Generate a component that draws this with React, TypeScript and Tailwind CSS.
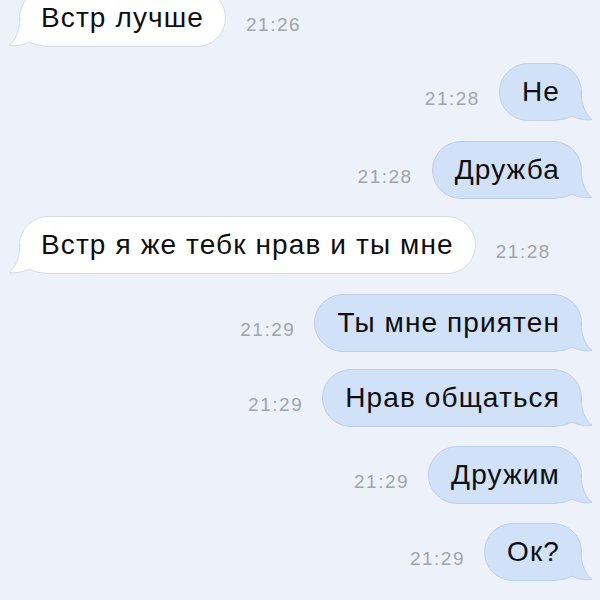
import React from 'react';

interface Message {
  id: number;
  text: string;
  time: string;
  out: boolean;
  top: number;
}

const messages: Message[] = [
  { id: 1, text: 'Встр лучше', time: '21:26', out: false, top: -11 },
  { id: 2, text: 'Не', time: '21:28', out: true, top: 16 },
  { id: 3, text: 'Дружба', time: '21:28', out: true, top: 20 },
  { id: 4, text: 'Встр я же тебк нрав и ты мне', time: '21:28', out: false, top: 17 },
  { id: 5, text: 'Ты мне приятен', time: '21:29', out: true, top: 20 },
  { id: 6, text: 'Нрав общаться', time: '21:29', out: true, top: 17 },
  { id: 7, text: 'Дружим', time: '21:29', out: true, top: 19 },
  { id: 8, text: 'Ок?', time: '21:29', out: true, top: 19 },
];

const Tail: React.FC<{ out: boolean }> = ({ out }) => {
  const fill = out ? '#d0e1f8' : '#ffffff';
  const stroke = out ? '#bfd0e6' : '#d6dce5';
  return (
    <svg
      width="34"
      height="31"
      viewBox="0 0 34 31"
      className={
        out
          ? 'absolute right-[-12px] bottom-[-1px] -scale-x-100'
          : 'absolute left-[-12px] bottom-[-1px]'
      }
    >
      <path d="M12 1 C12 15 7 25 1 29.5 C8 30.5 15 29 21 26 C25 28 29 29.5 33 29.5 L33 1 Z" fill={fill} />
      <path
        d="M12 1 C12 15 7 25 1 29.5 C8 30.5 15 29 21 26 C25 28 29 29.5 33 29.5"
        fill="none"
        stroke={stroke}
        strokeWidth="1"
      />
    </svg>
  );
};

const Bubble: React.FC<{ msg: Message }> = ({ msg }) => (
  <div
    className={
      msg.out
        ? 'relative h-[58px] flex items-center pl-[22px] pr-[21px] rounded-[29px] bg-[#d0e1f8] border border-[#bfd0e6]'
        : 'relative h-[58px] flex items-center pl-[21px] pr-[21px] rounded-[29px] bg-white border border-[#d6dce5]'
    }
  >
    <span className="relative z-10 text-[28px] leading-none tracking-[0.04em] text-[#0e0e0e] whitespace-nowrap">
      {msg.text}
    </span>
    <Tail out={msg.out} />
  </div>
);

const Time: React.FC<{ time: string }> = ({ time }) => (
  <span className="mt-[12px] text-[19px] leading-none tracking-[0.08em] text-[#a0a5ab]">
    {time}
  </span>
);

export default function App() {
  return (
    <div
      className="w-[600px] h-[600px] overflow-hidden bg-[#edf2fa] flex flex-col"
      style={{ fontFamily: '"Liberation Sans", Arial, sans-serif' }}
    >
      {messages.map((msg) => (
        <div
          key={msg.id}
          className={
            msg.out
              ? 'flex items-center justify-end gap-[19px] pr-[18px] shrink-0'
              : 'flex items-center justify-start gap-[20px] pl-[19px] shrink-0'
          }
          style={{ marginTop: msg.top }}
        >
          {msg.out ? (
            <>
              <Time time={msg.time} />
              <Bubble msg={msg} />
            </>
          ) : (
            <>
              <Bubble msg={msg} />
              <Time time={msg.time} />
            </>
          )}
        </div>
      ))}
    </div>
  );
}
